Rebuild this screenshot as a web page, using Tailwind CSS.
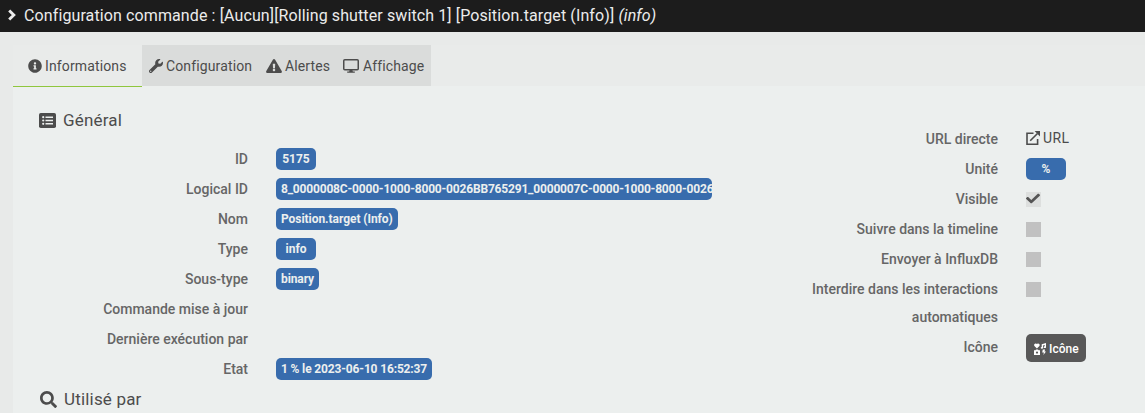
<!DOCTYPE html>
<html lang="fr">
<head>
<meta charset="utf-8">
<title>Configuration commande</title>
<script src="https://cdn.jsdelivr.net/npm/@tailwindcss/browser@4"></script>
</head>
<body class="h-[413px] overflow-hidden bg-[#e8eae9] font-['Roboto',sans-serif] text-[14px] text-[#555555]">
<header class="flex h-8 items-center bg-[#1c1c1c] pl-2 text-[16px] text-[#ececec]">
  <svg class="-mt-0.5 h-3 w-2 shrink-0" viewBox="0 0 8 12" fill="none" stroke="currentColor" stroke-width="2.9"><path d="M1.2 1.5 5.8 6 1.2 10.5"/></svg>
  <h1 class="ml-2 whitespace-pre leading-8 tracking-[0.11px]">Configuration commande : [Aucun][Rolling shutter switch 1] [Position.target (Info)] <i>(info)</i></h1>
</header>
<main class="ml-[13px] mt-[13px]">
  <nav class="flex h-[41px] whitespace-nowrap bg-[#e9ebea] tracking-[0.13px] text-[#4c4c4c]">
    <a class="z-10 flex h-[42px] w-[129px] items-center border-b border-[#8fc63d] pl-[15px]">
      <svg class="mr-1 size-[14px]" viewBox="0 0 512 512" fill="currentColor"><path d="M256 8C119.043 8 8 119.083 8 256c0 136.997 111.043 248 248 248s248-111.003 248-248C504 119.083 392.957 8 256 8zm0 110c23.196 0 42 18.804 42 42s-18.804 42-42 42-42-18.804-42-42 18.804-42 42-42zm56 254c0 6.627-5.373 12-12 12h-88c-6.627 0-12-5.373-12-12v-24c0-6.627 5.373-12 12-12h12v-64h-12c-6.627 0-12-5.373-12-12v-24c0-6.627 5.373-12 12-12h64c6.627 0 12 5.373 12 12v100h12c6.627 0 12 5.373 12 12v24z"/></svg>
      <span class="-ml-px pt-0.5">Informations</span>
    </a>
    <div class="flex w-[289px] bg-[#dadcdb]">
      <a class="flex w-[117px] items-center pl-[7px]">
        <svg class="mr-[3px] size-[14px]" viewBox="0 0 512 512" fill="currentColor"><path d="M507.73 109.1c-2.24-9.03-13.54-12.09-20.12-5.51l-74.36 74.36-67.88-11.31-11.31-67.88 74.36-74.36c6.62-6.62 3.43-17.9-5.66-20.16-47.38-11.74-99.55.91-136.58 37.93-39.64 39.64-50.55 97.1-34.05 147.2L18.74 402.76c-24.99 24.99-24.99 65.51 0 90.5 24.99 24.99 65.51 24.99 90.5 0l213.21-213.21c50.12 16.71 107.47 5.68 147.37-34.22 37.07-37.07 49.7-89.32 37.91-136.73zM64 472c-13.25 0-24-10.75-24-24 0-13.26 10.75-24 24-24s24 10.74 24 24c0 13.25-10.75 24-24 24z"/></svg>
        <span class="pt-0.5">Configuration</span>
      </a>
      <a class="flex w-[78px] items-center pl-[7px]">
        <svg class="mr-[3px] h-[14px] w-4" viewBox="0 0 576 512" fill="currentColor"><path d="M569.517 440.013C587.975 472.007 564.806 512 527.94 512H48.054c-36.937 0-59.999-40.055-41.577-71.987L246.423 23.985c18.467-32.009 64.72-31.951 83.154 0l239.94 416.028zM288 354c-25.405 0-46 20.595-46 46s20.595 46 46 46 46-20.595 46-46-20.595-46-46-46zm-43.673-165.346l7.418 136c.347 6.364 5.609 11.346 11.982 11.346h48.546c6.373 0 11.635-4.982 11.982-11.346l7.418-136c.375-6.874-5.098-12.654-11.982-12.654h-63.383c-6.884 0-12.356 5.78-11.981 12.654z"/></svg>
        <span class="pt-0.5">Alertes</span>
      </a>
      <a class="flex items-center pl-[6px]">
        <svg class="mr-[3px] h-[14px] w-4" viewBox="0 0 16 14"><rect x=".75" y=".75" width="14.5" height="10" rx="1" fill="none" stroke="currentColor" stroke-width="1.5"/><path d="M6.6 11h2.8l.4 1.6h2v1.2H4.2v-1.2h2z" fill="currentColor"/></svg>
        <span class="pl-px pt-0.5">Affichage</span>
      </a>
    </div>
  </nav>
  <div class="flex h-[327px] bg-[#ecefee]">
    <section class="w-[699px] pt-[19px]">
      <h2 class="flex h-[30px] items-center pl-[26px] text-[17px] font-normal tracking-[0.18px] text-[#4c4c4c]">
        <svg class="mr-[7px] h-[15px] w-[17px]" viewBox="0 0 17 15"><rect width="17" height="15" rx="1.8" fill="currentColor"/><g fill="#ecefee"><circle cx="4.2" cy="4.2" r="1.1"/><circle cx="4.2" cy="7.5" r="1.1"/><circle cx="4.2" cy="10.8" r="1.1"/><path d="M6.5 3.5H14v1.4H6.5zM6.5 6.8H14v1.4H6.5zM6.5 10.1H14v1.4H6.5z"/></g></svg>
        <span class="pt-0.5">Général</span>
      </h2>
      <div class="mt-[9px] grid auto-rows-[30px] grid-cols-[235px_436px] items-center gap-x-7 whitespace-nowrap text-right">
        <b class="font-medium text-[#666666]">ID</b><div class="flex"><span class="h-[22px] min-w-10 overflow-hidden rounded-[5px] bg-[#386cad] px-[5px] text-center text-[12px] font-bold leading-[22px] text-[#ecefee]">5175</span></div>
        <b class="font-medium text-[#666666]">Logical ID</b><div class="flex"><span class="h-[22px] w-[436px] overflow-hidden rounded-[5px] bg-[#386cad] pl-[5px] text-left text-[12px] font-bold leading-[22px] tracking-[-0.18px] text-[#ecefee]">8_0000008C-0000-1000-8000-0026BB765291_0000007C-0000-1000-8000-0026</span></div>
        <b class="font-medium text-[#666666]">Nom</b><div class="flex"><span class="h-[22px] min-w-10 overflow-hidden rounded-[5px] bg-[#386cad] px-[5px] text-center text-[12px] font-bold leading-[22px] tracking-[-0.05px] text-[#ecefee]">Position.target (Info)</span></div>
        <b class="font-medium text-[#666666]">Type</b><div class="flex"><span class="h-[22px] min-w-10 overflow-hidden rounded-[5px] bg-[#386cad] px-[5px] text-center text-[12px] font-bold leading-[22px] text-[#ecefee]">info</span></div>
        <b class="font-medium text-[#666666]">Sous-type</b><div class="flex"><span class="h-[22px] min-w-10 overflow-hidden rounded-[5px] bg-[#386cad] px-[5px] text-center text-[12px] font-bold leading-[22px] tracking-[-0.1px] text-[#ecefee]">binary</span></div>
        <b class="font-medium text-[#666666]">Commande mise à jour</b><div></div>
        <b class="font-medium text-[#666666]">Dernière exécution par</b><div></div>
        <b class="font-medium text-[#666666]">Etat</b><div class="flex"><span class="h-[22px] min-w-10 overflow-hidden rounded-[5px] bg-[#386cad] px-[5px] text-center text-[12px] font-bold leading-[22px] tracking-[-0.15px] text-[#ecefee]">1 % le 2023-06-10 16:52:37</span></div>
      </div>
      <h2 class="flex h-[30px] items-center pl-[27px] text-[17px] font-normal tracking-[0.18px] text-[#4c4c4c]">
        <svg class="mr-[7px] size-[17px]" viewBox="0 0 512 512" fill="currentColor"><path d="M505 442.7L405.3 343c-4.5-4.5-10.6-7-17-7H372c27.6-35.3 44-79.7 44-128C416 93.1 322.9 0 208 0S0 93.1 0 208s93.1 208 208 208c48.3 0 92.7-16.4 128-44v16.3c0 6.4 2.5 12.5 7 17l99.7 99.7c9.4 9.4 24.6 9.4 33.9 0l28.3-28.3c9.4-9.4 9.4-24.6.1-34zM208 336c-70.7 0-128-57.2-128-128 0-70.7 57.2-128 128-128 70.7 0 128 57.2 128 128 0 70.7-57.2 128-128 128z"/></svg>
        <span class="pt-0.5">Utilisé par</span>
      </h2>
    </section>
    <section class="grid grid-cols-[286px_100px] content-start gap-x-7 gap-y-[2px] pt-[39px] text-right leading-7">
      <b class="font-medium text-[#666666]">URL directe</b>
      <a class="flex h-[26px] items-center text-[#4c4c4c]"><svg class="mr-[3px] size-[14px]" viewBox="0 0 14 14" fill="none" stroke="currentColor" stroke-width="1.6"><path d="M7.5 2.3H1v10.9h10.6V8M4.2 9.8 11.5 2.5"/><path d="M8.6 0H14v5.4z" fill="currentColor" stroke="none"/></svg><span class="tracking-[0.4px]">URL</span></a>
      <b class="font-medium text-[#666666]">Unité</b>
      <div class="flex items-center"><span class="h-[22px] w-10 rounded-[5px] bg-[#386cad] text-center text-[12px] font-bold leading-[22px] text-[#ecefee]">%</span></div>
      <b class="font-medium text-[#666666]">Visible</b>
      <div class="flex items-center"><span class="mt-px size-[15px] bg-[#dddfde]"><svg class="h-[13px] w-[14px]" viewBox="0 0 512 512" preserveAspectRatio="none" fill="currentColor"><path d="M173.898 439.404l-166.4-166.4c-9.997-9.997-9.997-26.206 0-36.204l36.203-36.204c9.997-9.998 26.207-9.998 36.204 0L192 312.69 432.095 72.596c9.997-9.997 26.207-9.997 36.204 0l36.203 36.204c9.997 9.997 9.997 26.206 0 36.204l-294.4 294.401c-9.998 9.997-26.207 9.997-36.204-.001z"/></svg></span></div>
      <b class="font-medium text-[#666666]">Suivre dans la timeline</b>
      <div class="flex items-center"><span class="mt-px size-[15px] bg-[#c1c1c1]"></span></div>
      <b class="font-medium text-[#666666]">Envoyer à InfluxDB</b>
      <div class="flex items-center"><span class="mt-px size-[15px] bg-[#c1c1c1]"></span></div>
      <b class="pl-20 font-medium text-[#666666]">Interdire dans les interactions automatiques</b>
      <div class="flex h-7 items-center"><span class="mt-px size-[15px] bg-[#c1c1c1]"></span></div>
      <b class="font-medium text-[#666666]">Icône</b>
      <div class="mt-px flex h-7 w-[60px] items-center rounded-[5px] bg-[#585858] pl-2 text-[12px] font-medium text-white"><svg class="mr-[3px] mt-0.5 size-3" viewBox="0 0 12 12" fill="currentColor"><path d="M2.9 5.4.4 2.9C-.5 1.7.9-.2 2.4.7l.5.4.5-.4C4.9-.2 6.3 1.7 5.4 2.9z"/><path d="M7.7 1.2 12 0v4.2H10.7V1.9L9 2.4V5H7.7z"/><ellipse cx="7.9" cy="4.8" rx="1.2" ry=".9"/><ellipse cx="10.8" cy="4.2" rx="1.2" ry=".9"/><path d="M0 7.3h1.5L2 6.5h2l.5.8H6V12H0zM8.8 6.5h2.3l-.6 1.9H12L9.4 12l.5-2.5H8.2z"/><circle cx="3" cy="9.6" r="1.1" fill="#585858"/></svg><span class="pt-0.5">Icône</span></div>
    </section>
  </div>
</main>
</body>
</html>
